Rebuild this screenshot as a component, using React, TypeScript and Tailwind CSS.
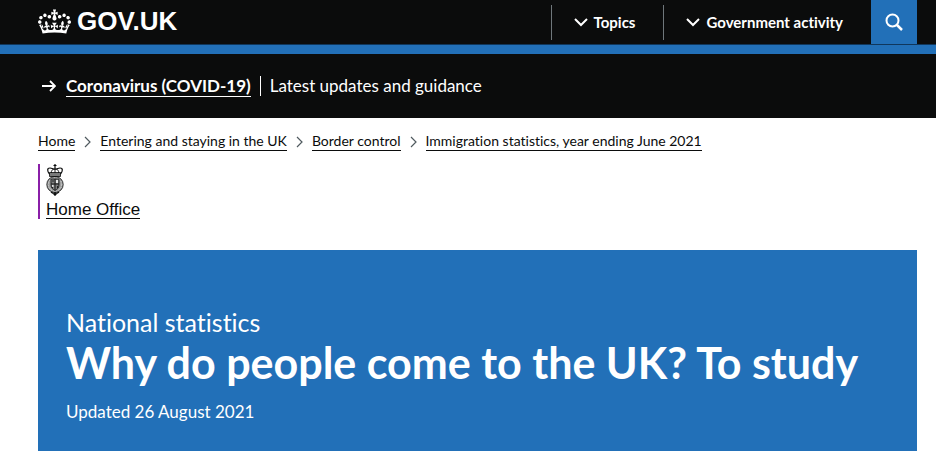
import type { ReactNode } from 'react';

const breadcrumbs = [
  'Home',
  'Entering and staying in the UK',
  'Border control',
  'Immigration statistics, year ending June 2021',
];

function Crown() {
  return (
    <svg viewBox="0 0 132 97" className="h-[25px] w-[33px]" fill="currentColor" aria-hidden="true">
      <path d="M25 30.2c3.5 1.5 7.7-.2 9.1-3.7 1.5-3.6-.2-7.8-3.9-9.2-3.6-1.4-7.6.3-9.1 3.9-1.4 3.5.3 7.5 3.9 9zM9 39.5c3.6 1.5 7.8-.2 9.2-3.7 1.5-3.6-.2-7.8-3.9-9.1-3.6-1.5-7.6.2-9.1 3.8-1.4 3.5.3 7.5 3.8 9zM4.4 57.2c3.5 1.5 7.7-.2 9.1-3.8 1.5-3.6-.2-7.7-3.9-9.1-3.5-1.5-7.6.3-9.1 3.8-1.4 3.5.3 7.6 3.9 9.1zm38.3-21.4c3.5 1.5 7.7-.2 9.1-3.8 1.5-3.6-.2-7.7-3.9-9.1-3.6-1.5-7.6.3-9.1 3.8-1.3 3.6.4 7.7 3.9 9.1zm64.4-5.6c-3.6 1.5-7.8-.2-9.1-3.7-1.5-3.6.2-7.8 3.8-9.2 3.6-1.4 7.7.3 9.2 3.9 1.3 3.5-.4 7.5-3.9 9zm15.9 9.3c-3.6 1.5-7.7-.2-9.1-3.7-1.5-3.6.2-7.8 3.7-9.1 3.6-1.5 7.7.2 9.2 3.8 1.5 3.5-.3 7.5-3.8 9zm4.7 17.7c-3.6 1.5-7.8-.2-9.2-3.8-1.5-3.6.2-7.7 3.9-9.1 3.6-1.5 7.7.3 9.2 3.8 1.3 3.5-.4 7.6-3.9 9.1zM89.3 35.8c-3.6 1.5-7.8-.2-9.2-3.8-1.4-3.6.2-7.7 3.9-9.1 3.6-1.5 7.7.3 9.2 3.8 1.4 3.6-.3 7.7-3.9 9.1zM69.7 17.7l8.9 4.7V9.3l-8.9 2.8c-.2-.3-.5-.6-.9-.9L72.4 0H59.6l3.5 11.2c-.3.3-.6.5-.9.9l-8.8-2.8v13.1l8.8-4.7c.3.3.6.7.9.9l-5 15.4v.1c-.2.8-.4 1.6-.4 2.4 0 4.1 3.1 7.5 7 8.1h.2c.3 0 .7.1 1 .1.4 0 .7 0 1-.1h.2c4-.6 7.1-4.1 7.1-8.1 0-.8-.1-1.7-.4-2.4V34l-5.1-15.4c.4-.2.7-.6 1-.9zM66 92.8c16.9 0 32.8 1.1 47.1 3.2 4-16.9 8.9-26.7 14-33.5l-9.6-3.4c1 4.9 1.1 7.2 0 10.2-1.5-1.4-3-4.3-4.2-8.7L108.6 76c2.8-2 5-3.2 7.5-3.3-4.4 9.4-10 11.9-13.6 11.2-4.3-.8-6.3-4.6-5.6-7.9 1-4.7 5.7-5.9 8-.5 4.3-8.7-3-11.4-7.6-8.8 7.1-7.2 7.9-13.5 2.1-21.1-8 6.1-8.1 12.3-4.5 20.8-4.7-5.4-12.1-2.5-9.5 6.2 3.4-5.2 7.9-2 7.2 3.1-.6 4.3-6.4 7.8-13.5 7.2-10.3-.9-10.9-8-11.2-13.8 2.5-.5 7.1 1.8 11 7.3L80.2 60c-4.1 4.4-8 5.3-12.3 5.4 1.4-4.4 8-11.6 8-11.6H55.5s6.4 7.2 7.9 11.6c-4.2-.1-8-1-12.3-5.4l1.4 16.4c3.9-5.5 8.5-7.7 10.9-7.3-.3 5.8-.9 12.8-11.1 13.8-7.2.6-12.9-2.9-13.5-7.2-.7-5 3.8-8.3 7.1-3.1 2.7-8.7-4.6-11.6-9.4-6.2 3.7-8.5 3.6-14.7-4.6-20.8-5.8 7.6-5 13.9 2.2 21.1-4.7-2.6-11.9.1-7.7 8.8 2.3-5.5 7.1-4.2 8.1.5.7 3.3-1.3 7.1-5.7 7.9-3.5.7-9-1.8-13.5-11.2 2.5.1 4.7 1.3 7.5 3.3l-4.7-15.4c-1.2 4.4-2.7 7.2-4.3 8.7-1.1-3-.9-5.3 0-10.2l-9.5 3.4c5 6.9 9.9 16.7 14 33.5 14.8-2.1 30.8-3.2 47.7-3.2z" />
    </svg>
  );
}

function Crest() {
  return (
    <svg viewBox="0 0 18 32" className="h-8 w-[18px]" fill="none" stroke="currentColor" aria-hidden="true">
      <path d="M9 0v4M7.5 1.5h3" strokeWidth="1.2" />
      <path d="M3.5 10C1 7 1 4 4 4c2 0 2.5 1 5 1s3-1 5-1c3 0 3 3 .5 6" strokeWidth="1.2" />
      <path d="M5.5 9c-.5-2 .5-4 3.5-4s4 2 3.5 4M9 4v5" strokeWidth=".9" />
      <path d="M3.5 8.500h11v4h-11z" fill="currentColor" fillOpacity=".55" strokeWidth=".8" />
      <ellipse cx="9" cy="20.500" rx="8.200" ry="8" fill="currentColor" fillOpacity=".4" strokeWidth=".8" />
      <ellipse cx="9" cy="20.500" rx="6.700" ry="6.600" stroke="white" strokeWidth=".8" strokeDasharray="1.500 1.200" opacity=".6" />
      <path d="M5 15h8v6c0 3-2 4.500-4 5.500-2-1-4-2.500-4-5.500z" fill="currentColor" fillOpacity=".2" strokeWidth=".8" />
      <path d="M9 15v11M5 20h8" strokeWidth=".9" />
      <path d="M6 17h2M6.500 22v2M11.500 22v2" strokeWidth=".8" />
      <path d="M10 16h2v3h-2zM6 21h1.500v2H6z" fill="white" fillOpacity=".8" stroke="none" />
      <path d="M5 28c1 1 2 1.500 4 1.500s3-.5 4-1.500M9 28v4M7.500 30.500h3" strokeWidth="1.200" />
    </svg>
  );
}

function ChevronDown() {
  return (
    <svg viewBox="0 0 14 9" className="h-[9px] w-3.5" fill="none" stroke="currentColor" strokeWidth="2" aria-hidden="true">
      <path d="M1 1l6 6 6-6" />
    </svg>
  );
}

function ChevronRight() {
  return (
    <svg viewBox="0 0 7 12" className="mx-[9px] h-3 w-[7px] text-[#505a5f]" fill="none" stroke="currentColor" aria-hidden="true">
      <path d="M1 1l5 5-5 5" strokeWidth="1.2" />
    </svg>
  );
}

function NavButton({ children }: { children: ReactNode }) {
  return (
    <button
      type="button"
      className="flex h-[35px] items-center gap-1.5 border-l border-[#6f777b] pr-7 pl-[22px] text-[15px] font-bold"
    >
      <ChevronDown />
      {children}
    </button>
  );
}

export default function App() {
  return (
    <div className="bg-white font-['Lato',sans-serif] text-[#0b0c0c] [font-variant-ligatures:none]">
      <header className="bg-[#0b0c0c] text-white">
        <div className="flex h-11 items-center justify-between pr-[19px] pl-[38px]">
          <a
            href="#"
            className="flex items-center gap-1.5 pb-0.5 font-['Liberation_Sans',sans-serif] text-[26px] leading-6 font-bold"
          >
            <Crown />
            GOV.UK
          </a>
          <div className="flex items-center">
            <nav className="flex items-center">
              <NavButton>Topics</NavButton>
              <NavButton>Government activity</NavButton>
            </nav>
            <button type="button" aria-label="Search GOV.UK" className="grid h-11 w-[46px] place-items-center bg-[#2270b8]">
              <svg viewBox="0 0 18 18" className="h-[18px] w-[18px]" fill="none" stroke="currentColor" aria-hidden="true">
                <circle cx="7.5" cy="7.5" r="6" strokeWidth="2" />
                <path d="M12 12l5 5" strokeWidth="2.5" />
              </svg>
            </button>
          </div>
        </div>
        <div className="h-2.5 border-t border-[#10375c] bg-[#2270b8]" />
        <div className="flex h-16 items-center px-[42px] text-[17px] leading-5">
          <svg viewBox="0 0 14 12" className="mr-2.5 h-3 w-3.5" fill="none" stroke="currentColor" strokeWidth="1.8" aria-hidden="true">
            <path d="M0 6h13M8 1l5 5-5 5" />
          </svg>
          <a href="#" className="border-b border-white font-bold">
            Coronavirus (COVID-19)
          </a>
          <p className="ml-[9px] border-l border-white pl-[9px]">Latest updates and guidance</p>
        </div>
      </header>

      <nav aria-label="Breadcrumb" className="px-[38px] pt-3.5">
        <ol className="flex items-center text-[14px] leading-[18px]">
          {breadcrumbs.map((crumb, index) => (
            <li key={crumb} className="flex items-center">
              {index > 0 ? <ChevronRight /> : null}
              <a href="#" className="border-b border-[#0b0c0c]">
                {crumb}
              </a>
            </li>
          ))}
        </ol>
      </nav>

      <main className="pt-[13px] pr-[19px] pl-[38px]">
        <a
          href="#"
          className="flex w-fit flex-col items-start border-l-2 border-[#8a1fa8] pl-1.5 font-['Liberation_Sans',sans-serif] text-[17px]"
        >
          <Crest />
          <span className="mt-[5px] border-b border-[#0b0c0c] leading-[17px]">Home Office</span>
        </a>

        <div className="mt-[31px] bg-[#2270b8] px-7 pt-[57px] pb-[27px] text-white">
          <p className="text-[25px] leading-[30px]">National statistics</p>
          <h1 className="text-[43px] leading-[52px] font-bold">Why do people come to the UK? To study</h1>
          <p className="mt-[11px] text-[17px] leading-6">Updated 26 August 2021</p>
        </div>
      </main>
    </div>
  );
}
